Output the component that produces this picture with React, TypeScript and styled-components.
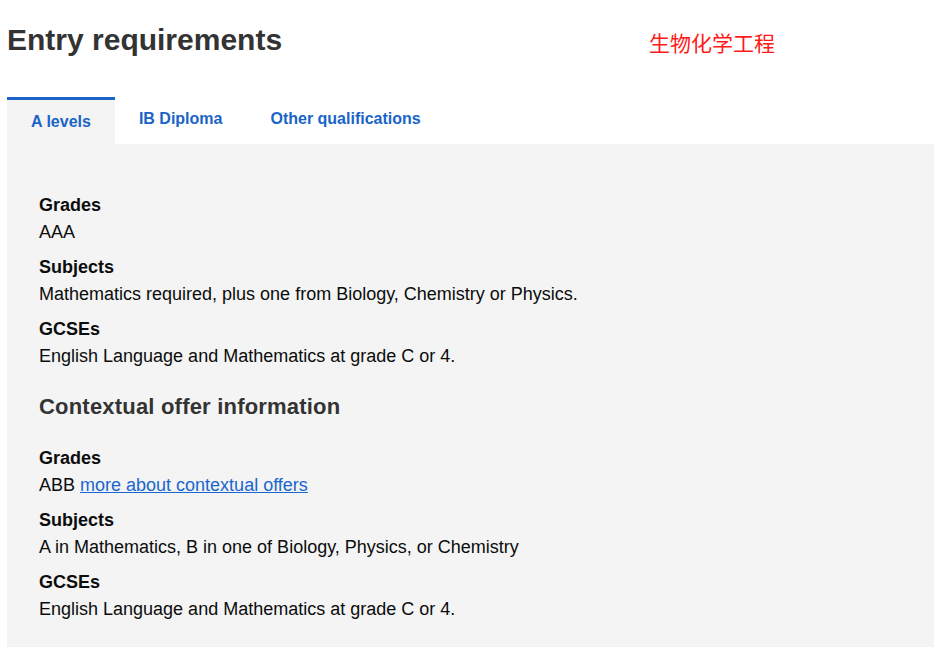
import React, {useState} from 'react';
import styled, {createGlobalStyle} from 'styled-components';

type Row = {label: string; value: React.ReactNode};

const tabs = ['A levels', 'IB Diploma', 'Other qualifications'];

const standard: Row[] = [
  {label: 'Grades', value: 'AAA'},
  {label: 'Subjects', value: 'Mathematics required, plus one from Biology, Chemistry or Physics.'},
  {label: 'GCSEs', value: 'English Language and Mathematics at grade C or 4.'},
];

// built inside the component, Link is declared further down
const getContextual = (): Row[] => [
  {
    label: 'Grades',
    value: (
      <>
        ABB <Link href="#">more about contextual offers</Link>
      </>
    ),
  },
  {label: 'Subjects', value: 'A in Mathematics, B in one of Biology, Physics, or Chemistry'},
  {label: 'GCSEs', value: 'English Language and Mathematics at grade C or 4.'},
];

function Rows({rows}: {rows: Row[]}): JSX.Element {
  return (
    <List>
      {rows.map((r, i) => (
        <React.Fragment key={r.label}>
          <Label>{r.label}</Label>
          <Value $last={i === rows.length - 1}>{r.value}</Value>
        </React.Fragment>
      ))}
    </List>
  );
}

export default function App(): JSX.Element {
  const [active, setActive] = useState(0);

  return (
    <>
      <GlobalStyle />
      <Page>
        <Header>
          <Title>Entry requirements</Title>
          <Tag>生物化学工程</Tag>
        </Header>
        <TabList>
          {tabs.map((t, i) => (
            <Tab key={t} $active={i === active} onClick={() => setActive(i)}>
              {t}
            </Tab>
          ))}
        </TabList>
        <Panel>
          <Rows rows={standard} />
          <SubHeading>Contextual offer information</SubHeading>
          <Rows rows={getContextual()} />
        </Panel>
      </Page>
    </>
  );
}

const GlobalStyle = createGlobalStyle`
  html, body {
    margin: 0;
    padding: 0;
    background: #fff;
    font-family: "Liberation Sans", Arial, sans-serif;
  }
`;

const Page = styled.main`
  width: 927px;
  margin-left: 7px;
`;

const Header = styled.header`
  display: grid;
  grid-template-columns: 642px auto;
  align-items: start;
  padding-top: 22px;
  height: 97px;
  box-sizing: border-box;
`;

const Title = styled.h1`
  margin: 0;
  font-size: 30px;
  line-height: 36px;
  font-weight: 700;
  color: #333;
`;

const Tag = styled.span`
  margin-top: 6px;
  font-family: "Noto Sans CJK SC", sans-serif;
  font-size: 21px;
  line-height: 28px;
  color: #ff1a1a;
`;

const TabList = styled.nav`
  display: flex;
  align-items: flex-start;
`;

const Tab = styled.button<{$active: boolean}>`
  border: none;
  border-top: ${(p) => (p.$active ? '3px solid #1a64c8' : 'none')};
  background: ${(p) => (p.$active ? '#f4f4f4' : 'transparent')};
  padding: 12px 24px ${(p) => (p.$active ? '12px' : '15px')};
  font-family: inherit;
  font-size: 16px;
  line-height: 20px;
  font-weight: 700;
  color: #1a64c8;
  cursor: pointer;
`;

const Panel = styled.section`
  background: #f4f4f4;
  padding: 48px 32px 24px;
`;

const List = styled.dl`
  margin: 0;
`;

const Label = styled.dt`
  font-size: 18px;
  line-height: 27px;
  font-weight: 700;
  color: #0b0c0c;
`;

const Value = styled.dd<{$last?: boolean}>`
  margin: 0 0 ${(p) => (p.$last ? '0' : '8px')};
  font-size: 18px;
  line-height: 27px;
  color: #0b0c0c;
`;

const SubHeading = styled.h2`
  margin: 22px 0 23px;
  font-size: 22px;
  line-height: 30px;
  letter-spacing: 0.2px;
  font-weight: 700;
  color: #333;
`;

const Link = styled.a`
  color: #1a66d0;
  text-decoration: underline;
`;
